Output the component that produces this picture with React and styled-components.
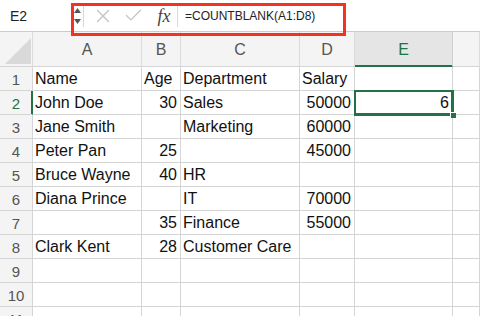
import React from 'react'
import styled, { createGlobalStyle, css } from 'styled-components'
import { X, Check } from 'lucide-react'

const GREEN = '#217346'
const GRID = '#d5d5d5'

const GlobalStyle = createGlobalStyle`
  html, body {
    margin: 0;
    padding: 0;
    background: #fff;
    overflow: hidden;
  }
  body {
    font-family: "Liberation Sans", Arial, sans-serif;
    color: #111;
  }
`

const Window = styled.div`
  position: relative;
  width: 480px;
  height: 316px;
  overflow: hidden;
  background: #fff;
`

const FormulaBar = styled.div`
  display: flex;
  align-items: center;
  height: 31px;
  border-bottom: 1px solid #cbcbcb;
`

const NameBox = styled.div`
  width: 65px;
  padding-left: 10px;
  font-size: 14px;
  color: #222;
  box-sizing: border-box;
`

const Spinner = styled.div`
  display: flex;
  flex-direction: column;
  justify-content: center;
  gap: 6px;
  width: 18px;
  padding-left: 9px;
  box-sizing: border-box;
`

const Divider = styled.div`
  width: 1px;
  height: 22px;
  background: #d8d8d8;
`

const ToolIcon = styled.div`
  display: flex;
  align-items: center;
  justify-content: center;
  width: 30px;
  color: #c2c2c2;
`

const Fx = styled.div`
  width: 26px;
  margin-left: 3px;
  font-family: "Liberation Serif", "Times New Roman", serif;
  font-style: italic;
  font-size: 18px;
  color: #444;
  text-align: center;
  line-height: 1;
`

const Formula = styled.div`
  padding-left: 7px;
  font-size: 12px;
  color: #222;
`

const Highlight = styled.div`
  position: absolute;
  left: 71px;
  top: 3px;
  width: 275px;
  height: 33px;
  border: 3px solid #f3321f;
  box-sizing: border-box;
  pointer-events: none;
  z-index: 5;
`

const Sheet = styled.div`
  display: grid;
  grid-template-columns: 33px 109px 39px 119px 55px 98px 1fr;
  grid-template-rows: 35px;
  grid-auto-rows: 24px;
`

const Cell = styled.div`
  position: relative;
  box-sizing: border-box;
  border-right: 1px solid ${GRID};
  border-bottom: 1px solid ${GRID};
  display: flex;
  align-items: center;
  padding: 1px 3px 0 2px;
  font-size: 16px;
  white-space: nowrap;
  overflow: visible;
  justify-content: ${p => (p.$num ? 'flex-end' : 'flex-start')};

  ${p => p.$selected && css`
    z-index: 2;
    box-shadow: 0 0 0 1px ${GREEN}, inset 0 0 0 1px ${GREEN};
    border-color: ${GREEN};

    &::after {
      content: '';
      position: absolute;
      right: -4px;
      bottom: -4px;
      width: 5px;
      height: 5px;
      background: ${GREEN};
      border: 1px solid #fff;
      border-right: 0;
      border-bottom: 0;
    }
  `}
`

const ColHeader = styled.div`
  box-sizing: border-box;
  display: flex;
  align-items: center;
  justify-content: center;
  padding-top: 2px;
  font-size: 16px;
  background: ${p => (p.$active ? '#e5e5e5' : '#f4f4f4')};
  color: ${p => (p.$active ? GREEN : '#555')};
  border-right: 1px solid ${p => (p.$active ? '#d0d0d0' : '#dcdcdc')};
  border-bottom: 1px solid ${p => (p.$active ? GREEN : GRID)};
  ${p => p.$active && css`box-shadow: inset 0 -1px 0 ${GREEN};`}
`

const Corner = styled.div`
  position: relative;
  box-sizing: border-box;
  background: #f4f4f4;
  border-right: 1px solid #dcdcdc;
  border-bottom: 1px solid ${GRID};
  display: flex;
  align-items: flex-end;
  justify-content: flex-end;
  padding: 0 1px 2px 0;
`

const RowHeader = styled.div`
  box-sizing: border-box;
  display: flex;
  align-items: center;
  justify-content: center;
  padding-top: 1px;
  font-size: 15px;
  background: #f4f4f4;
  color: ${p => (p.$active ? GREEN : '#555')};
  border-bottom: 1px solid ${GRID};
  border-right: 1px solid ${p => (p.$active ? GREEN : GRID)};
  ${p => p.$active && css`box-shadow: inset -1px 0 0 ${GREEN};`}
`

const columns = ['A', 'B', 'C', 'D', 'E', '']

const data = [
  ['Name', 'Age', 'Department', 'Salary', ''],
  ['John Doe', 30, 'Sales', 50000, 6],
  ['Jane Smith', '', 'Marketing', 60000, ''],
  ['Peter Pan', 25, '', 45000, ''],
  ['Bruce Wayne', 40, 'HR', '', ''],
  ['Diana Prince', '', 'IT', 70000, ''],
  ['', 35, 'Finance', 55000, ''],
  ['Clark Kent', 28, 'Customer Care', '', ''],
  ['', '', '', '', ''],
  ['', '', '', '', ''],
  ['', '', '', '', ''],
]

const Spin = ({ up }) => (
  <svg width="7" height="5" viewBox="0 0 7 5">
    <path d={up ? 'M3.5 0 L7 5 L0 5 Z' : 'M0 0 L7 0 L3.5 5 Z'} fill="#555" />
  </svg>
)

export default function App() {
  return (
    <Window>
      <GlobalStyle />
      <FormulaBar>
        <NameBox>E2</NameBox>
        <Spinner>
          <Spin up />
          <Spin />
        </Spinner>
        <Divider />
        <ToolIcon style={{ marginLeft: 4 }}>
          <X size={22} strokeWidth={1.3} />
        </ToolIcon>
        <ToolIcon>
          <Check size={21} strokeWidth={1.4} />
        </ToolIcon>
        <Fx>fx</Fx>
        <Divider />
        <Formula>=COUNTBLANK(A1:D8)</Formula>
      </FormulaBar>
      <Highlight />

      <Sheet>
        <Corner>
          <svg width="26" height="26" viewBox="0 0 26 26">
            <path d="M26 0 L26 26 L0 26 Z" fill="#d9d9d9" />
          </svg>
        </Corner>
        {columns.map((c, i) => (
          <ColHeader key={i} $active={c === 'E'}>{c}</ColHeader>
        ))}
        {data.map((row, r) => (
          <React.Fragment key={r}>
            <RowHeader $active={r === 1}>{r + 1}</RowHeader>
            {row.map((v, c) => (
              <Cell
                key={c}
                $num={typeof v === 'number'}
                $selected={r === 1 && c === 4}
              >
                {v}
              </Cell>
            ))}
            <Cell />
          </React.Fragment>
        ))}
      </Sheet>
    </Window>
  )
}
